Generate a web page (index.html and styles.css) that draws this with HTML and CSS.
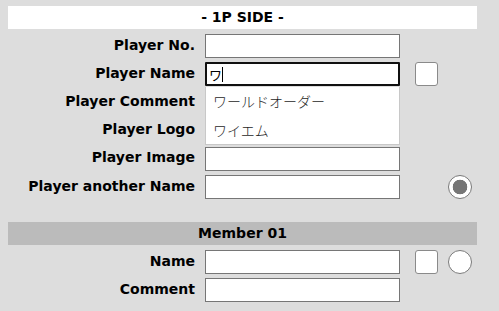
FILE: index.html
```html
<!DOCTYPE html>
<html lang="ja">
<head>
  <meta charset="UTF-8" />
  <title>1P SIDE</title>
  <meta name="viewport" content="width=device-width, initial-scale=1.0" />
  <link rel="stylesheet" href="styles.css">
</head>
<body>

  <div class="side-title">- 1P SIDE -</div>

  <div class="player">
    <div class="row">
      <label class="label">Player No.</label>
      <input class="field" type="text">
    </div>
    <div class="row">
      <label class="label">Player Name</label>
      <div class="field-wrap">
        <input class="field field-active" type="text" value="ワ">
        <span class="caret"></span>
        <ul class="suggest">
          <li>ワールドオーダー</li>
          <li>ワイエム</li>
        </ul>
      </div>
      <input class="check" type="checkbox">
    </div>
    <div class="row">
      <label class="label">Player Comment</label>
      <input class="field" type="text">
    </div>
    <div class="row">
      <label class="label">Player Logo</label>
      <input class="field" type="text">
    </div>
    <div class="row">
      <label class="label">Player Image</label>
      <input class="field" type="text">
    </div>
    <div class="row">
      <label class="label">Player another Name</label>
      <input class="field" type="text">
      <span></span>
      <input class="pick" type="radio" name="leader" checked>
    </div>
  </div>

  <div class="member-title">Member 01</div>

  <div class="member">
    <div class="row row-tight">
      <label class="label">Name</label>
      <input class="field" type="text">
      <input class="check" type="checkbox">
      <input class="pick" type="radio" name="leader">
    </div>
    <div class="row row-tight">
      <label class="label">Comment</label>
      <input class="field" type="text">
    </div>
  </div>

</body>
</html>
```

FILE: styles.css
```css
body {
  font-family: "DejaVu Sans", Verdana, sans-serif;
  font-size: 14px;
  margin: 0;
  padding: 6px 8px;
  width: 469px;
  background: #dddddd;
  color: #000;
}

.side-title {
  background: #ffffff;
  height: 23px;
  line-height: 23px;
  text-align: center;
  font-weight: bold;
}

.player {
  margin-top: 3px;
}

.row {
  display: grid;
  grid-template-columns: 187px 195px 23px 24px;
  column-gap: 10px;
  align-items: center;
  height: 28.2px;
}

.row > :nth-child(3) {
  margin-left: 5px;
}

.row > :nth-child(4) {
  margin-left: 5px;
}

.row-tight {
  height: 28px;
}

.label {
  text-align: right;
  font-weight: bold;
  white-space: nowrap;
  padding-bottom: 3px;
}

.field {
  box-sizing: border-box;
  width: 195px;
  height: 24px;
  margin: 0;
  padding: 1px 3px;
  border: 1px solid #767676;
  border-radius: 0;
  background: #ffffff;
  font-family: "Noto Sans CJK JP", "DejaVu Sans", sans-serif;
  font-size: 13px;
  color: #000;
  outline: none;
}

.field-wrap {
  position: relative;
  width: 195px;
  height: 24px;
}

.field-active {
  border: 2px solid #101010;
  border-radius: 1px;
  padding: 0 2px;
}

.caret {
  position: absolute;
  left: 17px;
  top: 5px;
  width: 1px;
  height: 15px;
  background: #000;
}

.suggest {
  position: absolute;
  left: 0;
  top: 25px;
  z-index: 10;
  box-sizing: border-box;
  width: 195px;
  margin: 0;
  padding: 0;
  list-style: none;
  background: #ffffff;
  border: 1px solid #c8c8c8;
  border-top: none;
  font-family: "Noto Sans CJK JP", sans-serif;
  font-size: 14px;
  font-weight: 300;
  color: #1e1e1e;
}

.suggest li {
  height: 28.5px;
  line-height: 28px;
  padding-left: 7px;
}

.check {
  appearance: none;
  box-sizing: border-box;
  width: 23px;
  height: 24px;
  margin: 0;
  border: 1px solid #8a8a8a;
  border-radius: 3px;
  background: #ffffff;
}

.pick {
  appearance: none;
  box-sizing: border-box;
  width: 24px;
  height: 24px;
  margin: 0;
  border: 1px solid #7a7a7a;
  border-radius: 50%;
  background: #ffffff;
}

.pick:checked {
  background: radial-gradient(circle, #767676 0, #767676 7px, #ffffff 7.6px);
}

.member-title {
  margin-top: 21px;
  background: #bbbbbb;
  height: 23px;
  line-height: 23px;
  text-align: center;
  font-weight: bold;
}

.member {
  margin-top: 3px;
}
```
